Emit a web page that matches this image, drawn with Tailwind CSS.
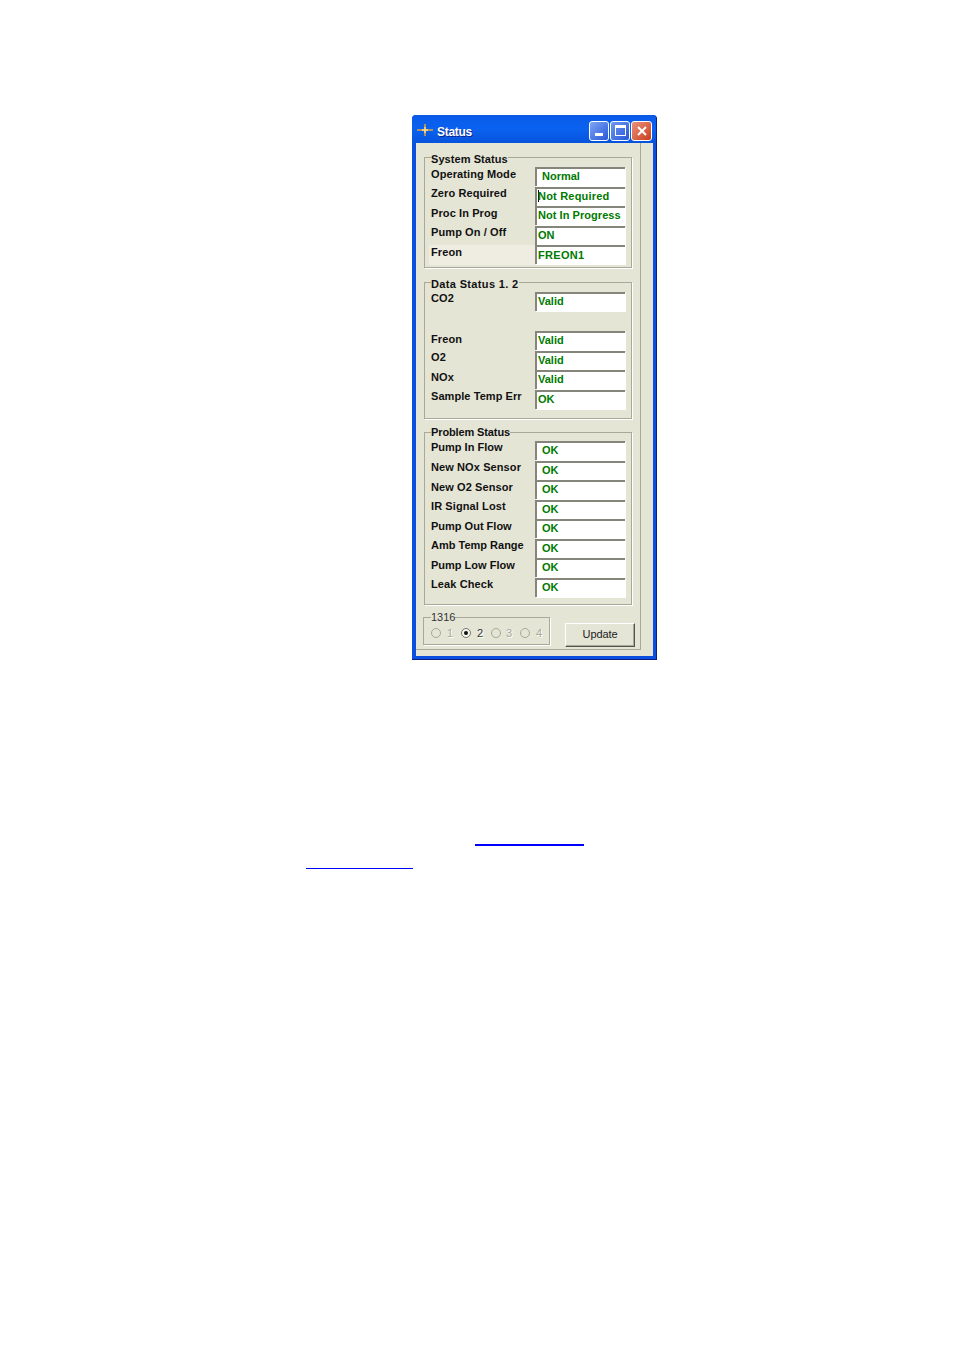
<!DOCTYPE html>
<html lang="en">

<head>
    <meta charset="UTF-8">
    <script src="https://cdn.jsdelivr.net/npm/@tailwindcss/browser@4"></script>
    <title>Status</title>
</head>

<body class="min-h-screen bg-white font-['Liberation_Sans',sans-serif] text-[11px] leading-[12px] text-[#111]">
    <div class="pt-[115px] pl-[412px]">
        <section class="w-[245px] h-[545px] flex flex-col bg-[#0a4fe0] rounded-t-[4px] border-r border-b border-[#0a1f80]">
            <header class="h-[28px] shrink-0 flex items-center pl-[5px] pr-[4px] rounded-t-[4px] bg-gradient-to-b from-[#0a5ae8] via-[#0a62f0] to-[#0753dc]">
                <svg width="16" height="16" viewBox="0 0 16 16" class="shrink-0 mt-[2px]">
                    <path d="M0 8h16" stroke="#f2a72e" stroke-width="1.4" />
                    <path d="M8 2v12" stroke="#f2a72e" stroke-width="1.4" />
                    <path d="M5 8h6M8 5v6" stroke="#ffe08a" stroke-width="1.4" />
                </svg>
                <h1 class="ml-[4px] mt-[5px] text-[12px] font-bold tracking-[-0.3px] text-white [text-shadow:1px_1px_0_#10208f]">Status</h1>
                <div class="ml-auto mt-[3px] flex gap-[1px]">
                    <span class="w-[20px] h-[20px] flex items-end justify-start pl-[5px] pb-[4px] rounded-[3px] border border-white bg-gradient-to-br from-[#7fa5f5] to-[#2a55d8]"><i class="block w-[8px] h-[3px] bg-white"></i></span>
                    <span class="w-[20px] h-[20px] flex items-center justify-center rounded-[3px] border border-white bg-gradient-to-br from-[#6f98f0] to-[#2a55d8]"><i class="block w-[11px] h-[11px] border border-t-[3px] border-white"></i></span>
                    <span class="w-[21px] h-[20px] flex items-center justify-center rounded-[3px] border border-white bg-gradient-to-br from-[#e8917a] to-[#c93a14]">
                        <svg width="12" height="12" viewBox="0 0 12 12"><path d="M2 2l8 8M10 2l-8 8" stroke="#fff" stroke-width="2" /></svg>
                    </span>
                </div>
            </header>

            <div class="w-[237px] h-[513px] ml-[4px] bg-[#e5e5d6]">
                <div class="w-[225px] h-[507px] border-r border-b border-[#a8a898] pt-[8px] pl-[8px] flex flex-col">
                    <fieldset class="w-[208px] border border-[#a9a999] shadow-[1px_1px_0_#fff] pl-[6px] pb-[2.5px] pr-[6px]">
                        <legend class="h-[12px] pt-[2px] font-semibold tracking-[0.07px]">System Status</legend>
                        <div class="flex flex-col pt-[4px]">
                            <div class="h-[19.5px] flex justify-between"><span class="mt-[1px] font-semibold tracking-[0.1px]">Operating Mode</span><output class="w-[90px] h-[19px] pl-[5px] pb-[3px] flex items-center border-2 border-r-0 border-b-0 border-[#85857c] bg-white shadow-[1px_1px_0_#fff] font-semibold text-[#007a00]">Normal</output></div>
                            <div class="h-[19.5px] flex justify-between"><span class="font-semibold tracking-[0.1px]">Zero Required</span><output class="w-[90px] h-[19px] pl-[1px] pb-[3px] flex items-center border-2 border-r-0 border-b-0 border-[#85857c] bg-white shadow-[1px_1px_0_#fff] font-semibold text-[#007a00] tracking-[0.2px]"><i class="w-[1px] h-[12px] -mr-[1px] bg-[#111]"></i>Not Required</output></div>
                            <div class="h-[19.5px] flex justify-between"><span class="mt-[1px] font-semibold tracking-[0.1px]">Proc In Prog</span><output class="w-[90px] h-[19px] pl-[1px] pb-[3px] flex items-center border-2 border-r-0 border-b-0 border-[#85857c] bg-white shadow-[1px_1px_0_#fff] font-semibold text-[#007a00] tracking-[0.05px]">Not In Progress</output></div>
                            <div class="h-[19.5px] flex justify-between"><span class="font-semibold tracking-[0.1px]">Pump On / Off</span><output class="w-[90px] h-[19px] pl-[1px] pb-[3px] flex items-center border-2 border-r-0 border-b-0 border-[#85857c] bg-white shadow-[1px_1px_0_#fff] font-semibold text-[#007a00]">ON</output></div>
                            <div class="h-[19.5px] flex justify-between bg-[#efece2] -ml-[2px] pl-[2px]"><span class="mt-[1px] font-semibold tracking-[0.1px]">Freon</span><output class="w-[90px] h-[19px] pl-[1px] pb-[2px] flex items-center border-2 border-r-0 border-b-0 border-[#85857c] bg-white shadow-[1px_1px_0_#fff] font-semibold text-[#007a00] tracking-[0.3px]">FREON1</output></div>
                        </div>
                    </fieldset>

                    <fieldset class="mt-[8.5px] w-[208px] border border-[#a9a999] shadow-[1px_1px_0_#fff] pl-[6px] pb-[8.5px] pr-[6px]">
                        <legend class="h-[12px] pt-[1px] font-semibold tracking-[0.35px]">Data Status 1. 2</legend>
                        <div class="flex flex-col pt-[3.5px]">
                            <div class="h-[39px] flex justify-between"><span class="font-semibold tracking-[0.1px]">CO2</span><output class="w-[90px] h-[19px] pl-[1px] pb-[3px] flex items-center border-2 border-r-0 border-b-0 border-[#85857c] bg-white shadow-[1px_1px_0_#fff] font-semibold text-[#007a00]">Valid</output></div>
                            <div class="h-[19.5px] flex justify-between"><span class="mt-[2px] font-semibold tracking-[0.1px]">Freon</span><output class="w-[90px] h-[19px] pl-[1px] pb-[3px] flex items-center border-2 border-r-0 border-b-0 border-[#85857c] bg-white shadow-[1px_1px_0_#fff] font-semibold text-[#007a00]">Valid</output></div>
                            <div class="h-[19.5px] flex justify-between"><span class="font-semibold tracking-[0.1px]">O2</span><output class="w-[90px] h-[19px] pl-[1px] pb-[3px] flex items-center border-2 border-r-0 border-b-0 border-[#85857c] bg-white shadow-[1px_1px_0_#fff] font-semibold text-[#007a00]">Valid</output></div>
                            <div class="h-[19.5px] flex justify-between"><span class="mt-[1px] font-semibold tracking-[0.1px]">NOx</span><output class="w-[90px] h-[19px] pl-[1px] pb-[3px] flex items-center border-2 border-r-0 border-b-0 border-[#85857c] bg-white shadow-[1px_1px_0_#fff] font-semibold text-[#007a00]">Valid</output></div>
                            <div class="h-[19.5px] flex justify-between"><span class="font-semibold tracking-[0.07px]">Sample Temp Err</span><output class="w-[90px] h-[19px] pl-[1px] pb-[3px] flex items-center border-2 border-r-0 border-b-0 border-[#85857c] bg-white shadow-[1px_1px_0_#fff] font-semibold text-[#007a00]">OK</output></div>
                        </div>
                    </fieldset>

                    <fieldset class="mt-[7.5px] w-[208px] border border-[#a9a999] shadow-[1px_1px_0_#fff] pl-[6px] pb-[6.5px] pr-[6px]">
                        <legend class="h-[12px] font-semibold tracking-[-0.12px]">Problem Status</legend>
                        <div class="flex flex-col pt-[3px]">
                            <div class="h-[19.5px] flex justify-between"><span class="font-semibold">Pump In Flow</span><output class="w-[90px] h-[19px] pl-[5px] pb-[3px] flex items-center border-2 border-r-0 border-b-0 border-[#85857c] bg-white shadow-[1px_1px_0_#fff] font-semibold text-[#007a00]">OK</output></div>
                            <div class="h-[19.5px] flex justify-between"><span class="mt-[0.5px] font-semibold tracking-[0.1px]">New NOx Sensor</span><output class="w-[90px] h-[19px] pl-[5px] pb-[3px] flex items-center border-2 border-r-0 border-b-0 border-[#85857c] bg-white shadow-[1px_1px_0_#fff] font-semibold text-[#007a00]">OK</output></div>
                            <div class="h-[19.5px] flex justify-between"><span class="mt-[0.5px] font-semibold tracking-[0.1px]">New O2 Sensor</span><output class="w-[90px] h-[19px] pl-[5px] pb-[3px] flex items-center border-2 border-r-0 border-b-0 border-[#85857c] bg-white shadow-[1px_1px_0_#fff] font-semibold text-[#007a00]">OK</output></div>
                            <div class="h-[19.5px] flex justify-between"><span class="mt-[0.5px] font-semibold tracking-[0.1px]">IR Signal Lost</span><output class="w-[90px] h-[19px] pl-[5px] pb-[3px] flex items-center border-2 border-r-0 border-b-0 border-[#85857c] bg-white shadow-[1px_1px_0_#fff] font-semibold text-[#007a00]">OK</output></div>
                            <div class="h-[19.5px] flex justify-between"><span class="mt-[0.5px] font-semibold">Pump Out Flow</span><output class="w-[90px] h-[19px] pl-[5px] pb-[3px] flex items-center border-2 border-r-0 border-b-0 border-[#85857c] bg-white shadow-[1px_1px_0_#fff] font-semibold text-[#007a00]">OK</output></div>
                            <div class="h-[19.5px] flex justify-between"><span class="mt-[0.5px] font-semibold">Amb Temp Range</span><output class="w-[90px] h-[19px] pl-[5px] pb-[3px] flex items-center border-2 border-r-0 border-b-0 border-[#85857c] bg-white shadow-[1px_1px_0_#fff] font-semibold text-[#007a00]">OK</output></div>
                            <div class="h-[19.5px] flex justify-between"><span class="mt-[0.5px] font-semibold">Pump Low Flow</span><output class="w-[90px] h-[19px] pl-[5px] pb-[3px] flex items-center border-2 border-r-0 border-b-0 border-[#85857c] bg-white shadow-[1px_1px_0_#fff] font-semibold text-[#007a00]">OK</output></div>
                            <div class="h-[19.5px] flex justify-between"><span class="mt-[0.5px] font-semibold tracking-[0.1px]">Leak Check</span><output class="w-[90px] h-[19px] pl-[5px] pb-[3px] flex items-center border-2 border-r-0 border-b-0 border-[#85857c] bg-white shadow-[1px_1px_0_#fff] font-semibold text-[#007a00]">OK</output></div>
                        </div>
                    </fieldset>

                    <div class="mt-[6.5px] -ml-[1px] flex items-start">
                        <fieldset class="w-[127px] h-[33.5px] border border-[#a9a999] shadow-[1px_1px_0_#fff] pl-[7px]">
                            <legend class="h-[12px] text-[#333]">1316</legend>
                            <div class="flex items-center h-[19px] text-[#a8a898] [text-shadow:1px_1px_0_#fff]">
                                <i class="w-[10px] h-[10px] rounded-full border border-[#a8a898] bg-[#e5e5d6]"></i>
                                <span class="ml-[6px] w-[14px]">1</span>
                                <i class="w-[10px] h-[10px] flex items-center justify-center rounded-full border border-[#777] bg-[#f4f4ea]"><b class="w-[4px] h-[4px] rounded-full bg-[#111]"></b></i>
                                <span class="ml-[6px] w-[14px] text-[#333]">2</span>
                                <i class="w-[10px] h-[10px] rounded-full border border-[#a8a898] bg-[#e5e5d6]"></i>
                                <span class="ml-[5px] w-[14px]">3</span>
                                <i class="w-[10px] h-[10px] rounded-full border border-[#a8a898] bg-[#e5e5d6]"></i>
                                <span class="ml-[6px]">4</span>
                            </div>
                        </fieldset>
                        <button class="ml-[15px] mt-[11.5px] pb-[2px] w-[70px] h-[24px] border border-t-white border-l-white border-r-[#55554c] border-b-[#55554c] shadow-[inset_-1px_-1px_0_#a8a898] bg-[#e5e5d6] text-[11px] tracking-[-0.1px] text-[#222]">Update</button>
                    </div>
                </div>
            </div>
        </section>

        <a class="block ml-[63px] mt-[184px] w-[109px] h-[2px] bg-[#0000ff]" href="#"></a>
        <a class="block -ml-[106px] mt-[22px] w-[107px] h-[1px] bg-[#0000ff]" href="#"></a>
    </div>
</body>

</html>
